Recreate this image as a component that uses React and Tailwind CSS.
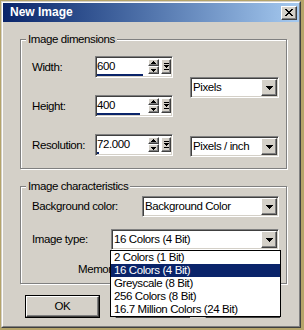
const ui = "font-['Liberation_Sans',Arial,sans-serif] text-[11.5px] tracking-[-0.4px] leading-[15px] text-black";
const raised = "bg-[#d4d0c8] border border-t-white border-l-white border-r-[#404040] border-b-[#404040] shadow-[inset_-1px_-1px_0_#808080]";
const sunken = "border border-t-[#808080] border-l-[#808080] border-r-white border-b-white shadow-[inset_1px_1px_0_#404040,inset_-1px_-1px_0_#d4d0c8]";
const group = "ml-[17px] w-[267px] border border-[#808080] shadow-[1px_1px_0_#fff,inset_1px_1px_0_#fff] flex flex-col";

// pixel glyphs, one string per row
const Glyph = ({ rows }) => (
    <svg width={rows[0].length} height={rows.length} shapeRendering="crispEdges">
        {rows.map((r, y) =>
            r.split('').map((c, x) => (c === '#' ? <rect key={x + '-' + y} x={x} y={y} width="1" height="1" /> : null))
        )}
    </svg>
);

const ARROW_DOWN = ['#######', '.#####.', '..###..', '...#...'];
const SMALL_UP = ['..#..', '.###.', '#####'];
const SMALL_DOWN = ['#####', '.###.', '..#..'];
const SLIDER = ['#####', '.....', '#####', '.###.', '..#..', '.....', '#####'];
const CLOSE_X = ['##....##', '.##..##.', '..####..', '...##...', '..####..', '.##..##.', '##....##'];

const SpinField = ({ value, bar }) => (
    <div className={`${sunken} bg-white w-[78px] h-[22px] flex flex-col p-[1px]`}>
        <div className="flex flex-1 min-h-0">
            <div className="flex-1 flex items-center">{value}</div>
            <div className="flex flex-col pt-[1px]">
                <div className={`${raised} w-[11px] h-[7px] flex items-center justify-center`}>
                    <Glyph rows={SMALL_UP} />
                </div>
                <div className={`${raised} w-[11px] h-[8px] flex items-center justify-center`}>
                    <Glyph rows={SMALL_DOWN} />
                </div>
            </div>
            <div className={`${raised} ml-[2px] mt-[1px] w-[10px] h-[15px] flex items-center justify-center`}>
                <Glyph rows={SLIDER} />
            </div>
        </div>
        <div className={`h-[2px] bg-[#0a246a] ${bar}`} />
    </div>
);

const Combo = ({ text, className, children }) => (
    <div className={`${sunken} relative bg-white h-[21px] flex items-center p-[1px] ${className}`}>
        <div className="flex-1 pl-[1px] whitespace-nowrap overflow-hidden">{text}</div>
        <div className={`${raised} w-[16px] h-full flex items-center justify-center`}>
            <Glyph rows={ARROW_DOWN} />
        </div>
        {children}
    </div>
);

const Button = ({ label, isDefault }) =>
    isDefault ? (
        <div className="w-[75px] h-[23px] border border-black">
            <div className={`${raised} h-full flex items-center justify-center`}>{label}</div>
        </div>
    ) : (
        <div className={`${raised} w-[75px] h-[23px] flex items-center justify-center`}>{label}</div>
    );

const types = ['2 Colors (1 Bit)', '16 Colors (4 Bit)', 'Greyscale (8 Bit)', '256 Colors (8 Bit)', '16.7 Million Colors (24 Bit)'];

export default function App() {
    return (
        <div className={`${ui} w-[304px] h-[330px] bg-[#b5a46a] pl-[1px] pt-[1px] pr-[3px] pb-[2px]`}>
            <div className="h-full border border-t-[#d4d0c8] border-l-[#d4d0c8] border-r-[#404040] border-b-[#404040]">
                <div className="h-full bg-[#d4d0c8] border border-t-white border-l-white border-r-[#808080] border-b-[#808080] flex flex-col">
                    {/* Title bar */}
                    <div className="h-[19px] flex items-center justify-between pl-[7px] pr-[2px] bg-linear-to-r from-[#0a246a] to-[#a6caf0]">
                        <span className="font-bold text-[12px] tracking-normal text-white">New Image</span>
                        <div className={`${raised} w-[16px] h-[14px] flex items-center justify-center`}>
                            <Glyph rows={CLOSE_X} />
                        </div>
                    </div>

                    {/* Image dimensions */}
                    <div className={`${group} mt-[17px] h-[130px]`}>
                        <div className="-mt-[8px] ml-[5px] px-[2px] w-fit h-[15px] bg-[#d4d0c8]">Image dimensions</div>
                        <div className="flex mt-[9px]">
                            <div className="flex flex-col gap-[17px] pl-[11px]">
                                <div className="flex items-center">
                                    <span className="w-[63px]">Width:</span>
                                    <SpinField value="600" bar="w-[46px]" />
                                </div>
                                <div className="flex items-center">
                                    <span className="w-[63px]">Height:</span>
                                    <SpinField value="400" bar="w-[43px]" />
                                </div>
                                <div className="flex items-center">
                                    <span className="w-[63px]">Resolution:</span>
                                    <SpinField value="72.000" bar="w-[2px]" />
                                </div>
                            </div>
                            <div className="flex flex-col ml-[17px] pt-[21px] gap-[38px]">
                                <Combo text="Pixels" className="w-[89px]" />
                                <Combo text="Pixels / inch" className="w-[89px]" />
                            </div>
                        </div>
                    </div>

                    {/* Image characteristics */}
                    <div className={`${group} mt-[17px] h-[98px]`}>
                        <div className="-mt-[8px] ml-[5px] px-[2px] w-fit h-[15px] bg-[#d4d0c8]">Image characteristics</div>
                        <div className="flex items-center mt-[2px] pl-[11px]">
                            <span className="w-[110px]">Background color:</span>
                            <Combo text="Background Color" className="w-[137px]" />
                        </div>
                        <div className="flex items-center mt-[12px] pl-[11px]">
                            <span className="w-[79px]">Image type:</span>
                            <Combo text="16 Colors (4 Bit)" className="w-[168px]">
                                <div className="absolute z-10 left-[-2px] top-[calc(100%+1px)] w-[171px] bg-white border border-black">
                                    {types.map((t, i) => (
                                        <div
                                            key={t}
                                            className={`h-[13px] leading-[13px] pl-[3px] whitespace-nowrap ${i === 1 ? 'bg-[#0a246a] text-white' : ''}`}
                                        >
                                            {t}
                                        </div>
                                    ))}
                                </div>
                            </Combo>
                        </div>
                        <div className="mt-[12px] ml-[57px]">Memory required</div>
                    </div>

                    {/* Buttons */}
                    <div className="flex gap-[15px] mt-[11px] ml-[22px]">
                        <Button label="OK" isDefault />
                        <Button label="Cancel" />
                        <Button label="Help" />
                    </div>
                </div>
            </div>
        </div>
    );
}
